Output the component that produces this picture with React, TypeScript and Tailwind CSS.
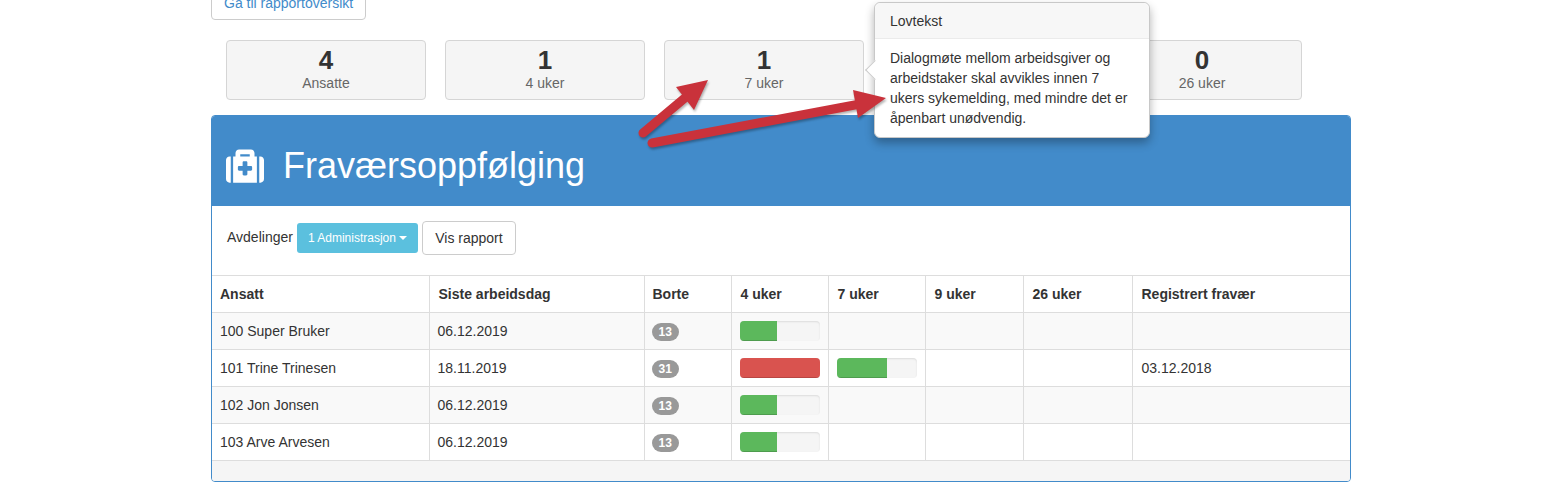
import { FaMedkit } from 'react-icons/fa';

const stats = [
  { value: 4, label: 'Ansatte' },
  { value: 1, label: '4 uker' },
  { value: 1, label: '7 uker' },
  { value: 0, label: '9 uker' },
  { value: 0, label: '26 uker' },
];

const rows = [
  { name: '100 Super Bruker', date: '06.12.2019', away: 13, week4: 'partial', week7: false, reg: '' },
  { name: '101 Trine Trinesen', date: '18.11.2019', away: 31, week4: 'full', week7: true, reg: '03.12.2018' },
  { name: '102 Jon Jonsen', date: '06.12.2019', away: 13, week4: 'partial', week7: false, reg: '' },
  { name: '103 Arve Arvesen', date: '06.12.2019', away: 13, week4: 'partial', week7: false, reg: '' },
];

const headers = ['Ansatt', 'Siste arbeidsdag', 'Borte', '4 uker', '7 uker', '9 uker', '26 uker', 'Registrert fravær'];
const colWidths = [217, 215, 87, 97, 97, 98, 109, 218];

function Progress({ color, width }: { color: string; width: number }) {
  return (
    <div className="h-5 w-20 overflow-hidden rounded bg-[#f5f5f5] shadow-[inset_0_1px_2px_rgba(0,0,0,0.1)]">
      <div className={`h-full ${color} shadow-[inset_0_-1px_0_rgba(0,0,0,0.15)]`} style={{ width }} />
    </div>
  );
}

export default function App() {
  return (
    <div className="relative h-[491px] overflow-hidden bg-white font-['Liberation_Sans',Arial,sans-serif] text-sm text-[#333]">
      <div className="relative ml-[211px] w-[1140px]">
        <div className="h-5 overflow-hidden">
          <button className="-mt-[14px] block h-[34px] rounded border border-[#ccc] bg-white px-3 text-[#428bca]">
            Gå til rapportoversikt
          </button>
        </div>

        {/* Tellere */}
        <div className="mt-5 ml-[15px] flex gap-[19px]">
          {stats.map((s) => (
            <div key={s.label} className="flex h-[60px] w-[200px] flex-col items-center overflow-hidden rounded border border-[#d5d5d5] bg-[#f5f5f5] pt-[4px]">
              <span className="text-[26px] leading-[30px] font-bold">{s.value}</span>
              <span className="-mt-px leading-[18px] text-[#666]">{s.label}</span>
            </div>
          ))}
        </div>

        {/* Panel */}
        <div className="mt-[15px] overflow-hidden rounded border border-[#428bca]">
          <div className="-mx-px -mt-px flex h-[91px] items-center bg-[#428bca] pt-[10px] pl-[15px] text-white">
            <FaMedkit className="h-[38px] w-[38px]" />
            <h1 className="ml-[20px] -translate-x-px text-4xl leading-[40px]">Fraværsoppfølging</h1>
          </div>

          <div className="flex h-[69px] items-center pb-[6px] pl-[15px]">
            <span className="-mt-px">Avdelinger</span>
            <button className="ml-1 flex h-[30px] items-center rounded-[3px] bg-[#5bc0de] px-[11px] text-xs text-white">
              1 Administrasjon
              <span className="ml-[3px] h-0 w-0 border-x-4 border-t-4 border-x-transparent border-t-white" />
            </button>
            <button className="ml-1 h-[34px] w-[94px] rounded border border-[#ccc] bg-white">Vis rapport</button>
          </div>

          <table className="w-full table-fixed border-collapse">
            <colgroup>
              {colWidths.map((w, i) => (
                <col key={i} style={{ width: w }} />
              ))}
            </colgroup>
            <thead>
              <tr className="h-[37px]">
                {headers.map((h, i) => (
                  <th
                    key={h}
                    className={
                      i === 0 || i === 2
                        ? 'border border-[#ddd] px-2 text-left font-bold first:border-l-0'
                        : 'border border-[#ddd] pr-2 pl-[9px] text-left font-bold last:border-r-0'
                    }
                  >
                    {h}
                  </th>
                ))}
              </tr>
            </thead>
            <tbody>
              {rows.map((r, i) => (
                <tr key={r.name} className={i % 2 === 0 ? 'h-[37px] bg-[#f9f9f9]' : 'h-[37px] bg-white'}>
                  <td className="border border-l-0 border-[#ddd] px-2">{r.name}</td>
                  <td className="border border-[#ddd] px-2">{r.date}</td>
                  <td className="border border-[#ddd] px-2">
                    <span className="-ml-px inline-block rounded-[10px] bg-[#999] px-[7px] py-[3px] align-middle text-xs leading-3 font-bold text-white">
                      {r.away}
                    </span>
                  </td>
                  <td className="border border-[#ddd] px-2">
                    {r.week4 === 'full' ? <Progress color="bg-[#d9534f]" width={80} /> : <Progress color="bg-[#5cb85c]" width={37} />}
                  </td>
                  <td className="border border-[#ddd] px-2">{r.week7 && <Progress color="bg-[#5cb85c]" width={50} />}</td>
                  <td className="border border-[#ddd] px-2" />
                  <td className="border border-[#ddd] px-2" />
                  <td className="border border-r-0 border-[#ddd] pr-2 pl-[9px]">{r.reg}</td>
                </tr>
              ))}
            </tbody>
          </table>
          <div className="h-5 bg-[#f5f5f5]" />
        </div>
      </div>

      {/* Popover */}
      <div className="absolute top-[2px] left-[874px] w-[276px] rounded-md border border-[#c8c8c8] bg-white shadow-[0_5px_10px_rgba(0,0,0,0.3)]">
        <div className="absolute top-[60px] -left-[7px] h-[14px] w-[14px] rotate-45 border-b border-l border-[#ccc] bg-white" />
        <div className="relative h-[36px] rounded-t-md border-b border-[#ebebeb] bg-[#f7f7f7] pl-[15px] leading-[36px]">Lovtekst</div>
        <div className="relative pt-[9px] pr-[14px] pb-[9px] pl-[15px] leading-5">
          Dialogmøte mellom arbeidsgiver og arbeidstaker skal avvikles innen 7 ukers sykemelding, med mindre det er åpenbart unødvendig.
        </div>
      </div>

      {/* Piler */}
      <svg className="absolute top-0 left-0" width="1547" height="491" fill="none">
        <g stroke="#c9323b" strokeWidth="9" strokeLinecap="round" fill="#c9323b" className="drop-shadow-[1px_2px_1px_rgba(0,0,0,0.3)]">
          <line x1="643" y1="133" x2="686" y2="97" />
          <line x1="652" y1="143" x2="860" y2="104" />
          <polygon points="708,80 676,87 694,110" stroke="none" />
          <polygon points="886,98 853,90 858,118" stroke="none" />
        </g>
      </svg>
    </div>
  );
}
